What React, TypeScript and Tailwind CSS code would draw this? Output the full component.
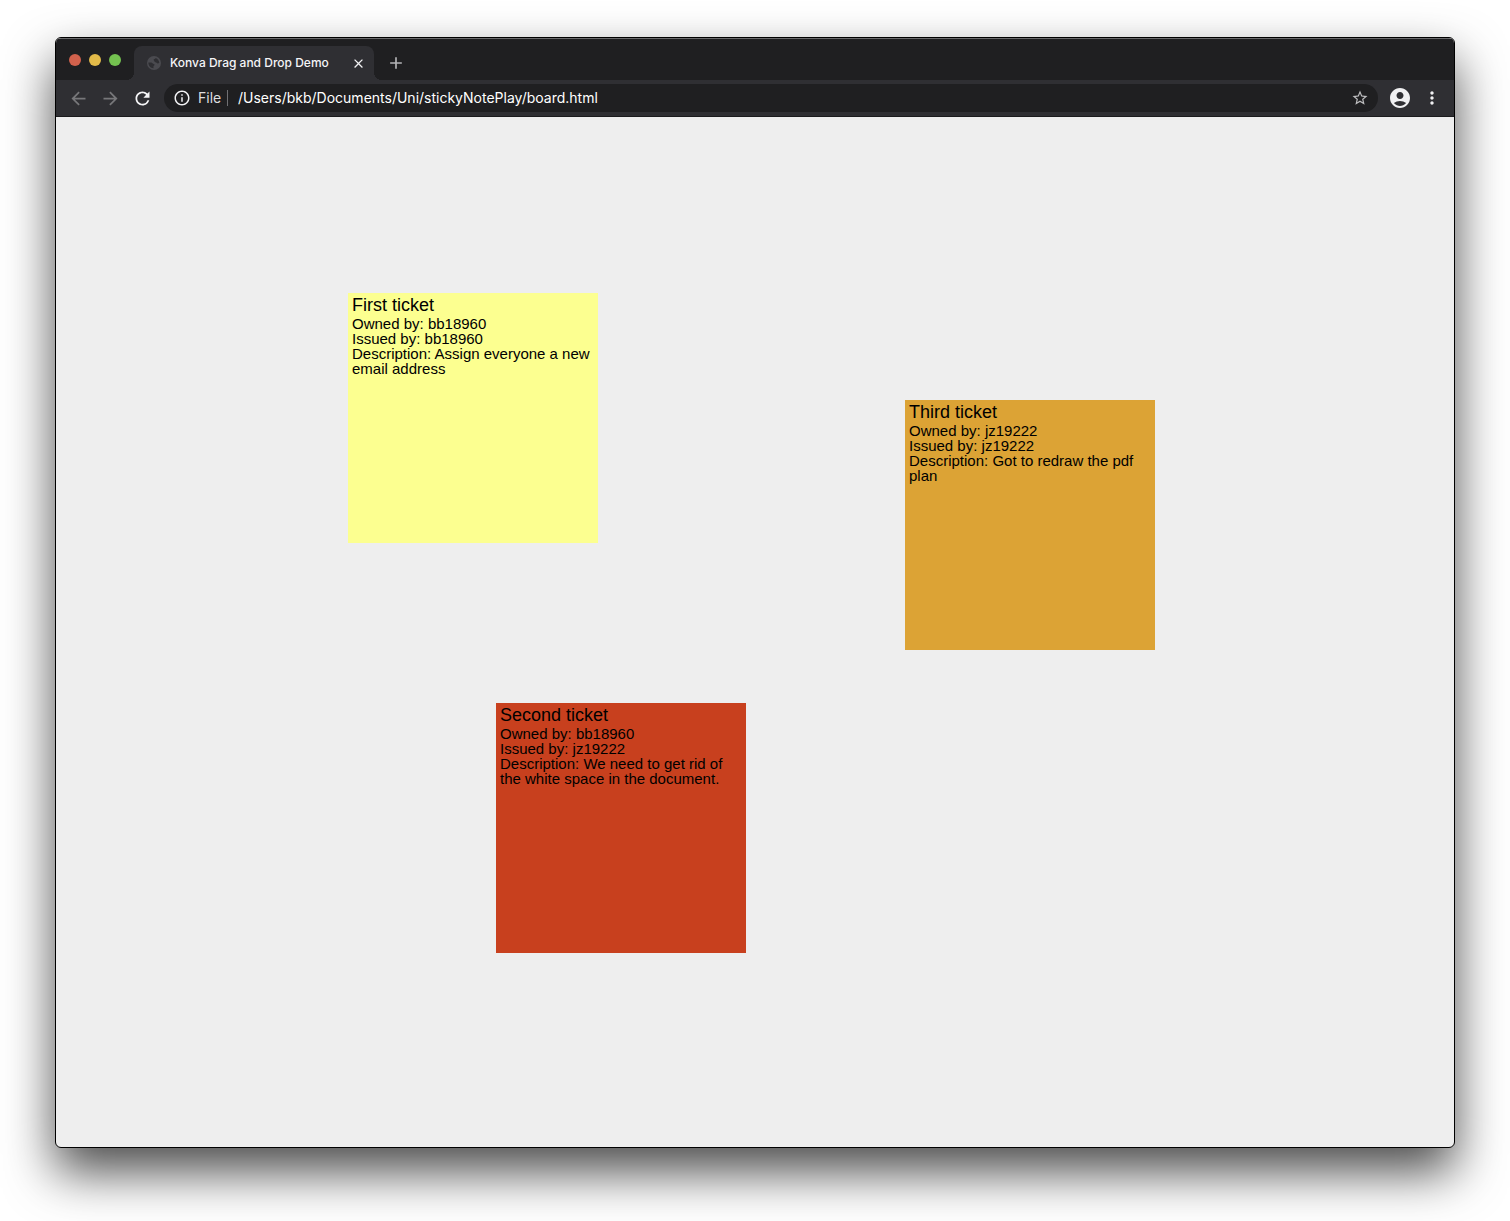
import { useState } from "react";
import {
  MdAccountCircle,
  MdAdd,
  MdArrowBack,
  MdArrowForward,
  MdClose,
  MdInfoOutline,
  MdMoreVert,
  MdRefresh,
  MdStarBorder,
} from "react-icons/md";

type Ticket = {
  title: string;
  owner: string;
  issuer: string;
  description: string;
  color: string;
  x: number;
  y: number;
};

const tickets: Ticket[] = [
  {
    title: "First ticket",
    owner: "bb18960",
    issuer: "bb18960",
    description: "Assign everyone a new email address",
    color: "bg-[#fcff90]",
    x: 292,
    y: 176,
  },
  {
    title: "Second ticket",
    owner: "bb18960",
    issuer: "jz19222",
    description: "We need to get rid of the white space in the document.",
    color: "bg-[#c8401e]",
    x: 440,
    y: 586,
  },
  {
    title: "Third ticket",
    owner: "jz19222",
    issuer: "jz19222",
    description: "Got to redraw the pdf plan",
    color: "bg-[#dca335]",
    x: 849,
    y: 283,
  },
];

function Globe() {
  return (
    <svg viewBox="0 0 14 14" className="size-3.5 shrink-0" aria-hidden="true">
      <circle cx="7" cy="7" r="7" fill="#4a4a4f" />
      <path
        d="M1.4 6.6h2.7c1.3 0 1.5 1.5 2.8 1.5.9 0 .9 1.9-.4 1.9v2.3C3.5 12.3 1.4 9.900 1.4 6.6zM8.6 1.9c-.1 1.300-2 .9-2 1.900 0 .9.900.8.900 1.700 0 1 1.900.5 2.300 1.500.3.700 1.700.4 2.500-.1 0-2.200-1.500-4.300-3.700-5z"
        fill="#2e2e32"
      />
    </svg>
  );
}

function TabStrip() {
  return (
    <div className="flex h-[41px] items-end bg-[#1f1f21]">
      <div className="flex gap-2 self-center px-[13px]">
        <button aria-label="Close window" className="size-3 rounded-full bg-[#d1614c]" />
        <button aria-label="Minimise window" className="size-3 rounded-full bg-[#e2ba49]" />
        <button aria-label="Zoom window" className="size-3 rounded-full bg-[#74c250]" />
      </div>
      <div className="relative flex h-[34px] w-60 items-center rounded-t-lg bg-[#2f2f33] pr-2 pl-[13px]">
        <span className="absolute bottom-0 -left-2 size-2 bg-[radial-gradient(circle_at_0_0,transparent_8px,#2f2f33_8px)]" />
        <span className="absolute -right-2 bottom-0 size-2 bg-[radial-gradient(circle_at_100%_0,transparent_8px,#2f2f33_8px)]" />
        <Globe />
        <span className="ml-[9px] flex-1 text-xs font-medium whitespace-nowrap text-[#f5f5f7]">
          Konva Drag and Drop Demo
        </span>
        <button aria-label="Close tab" className="flex size-4 items-center justify-center text-[#f0f0f2]">
          <MdClose size={15} />
        </button>
      </div>
      <button aria-label="New tab" className="mb-[7px] ml-3 text-[#b4b4b6]">
        <MdAdd size={20} />
      </button>
    </div>
  );
}

function Toolbar() {
  const [url, setUrl] = useState("/Users/bkb/Documents/Uni/stickyNotePlay/board.html");
  return (
    <div className="flex h-[37px] items-center border-b border-[#1b1b1d] bg-[#2f2f33] px-3">
      <div className="flex gap-[11px]">
        <button aria-label="Back" className="text-[#77777a]">
          <MdArrowBack size={21} />
        </button>
        <button aria-label="Forward" className="text-[#77777a]">
          <MdArrowForward size={21} />
        </button>
        <button aria-label="Reload" className="text-[#f5f5f7]">
          <MdRefresh size={21} />
        </button>
      </div>
      <div className="mr-[10px] ml-[11px] flex h-7 flex-1 items-center rounded-full bg-[#1f1f21] px-[9px] text-sm text-white">
        <button aria-label="View site information" className="text-[#f0f0f2]">
          <MdInfoOutline size={18} />
        </button>
        <label htmlFor="address" className="ml-[7px] w-[29px] text-[#dededf]">
          File
        </label>
        <span className="h-4 w-px bg-[#707073]" />
        <input
          id="address"
          value={url}
          onChange={(e) => setUrl(e.target.value)}
          className="ml-[10px] min-w-0 flex-1 bg-transparent outline-none"
        />
        <button aria-label="Bookmark this page" className="text-[#bdbdbf]">
          <MdStarBorder size={18} />
        </button>
      </div>
      <button aria-label="Profile" className="text-[#f0f0f2]">
        <MdAccountCircle size={24} />
      </button>
      <button aria-label="Browser menu" className="ml-[10px] text-[#f0f0f2]">
        <MdMoreVert size={20} />
      </button>
    </div>
  );
}

function StickyNote({ ticket }: { ticket: Ticket }) {
  return (
    <article
      className={`absolute size-[250px] px-1 pt-[3px] font-['Liberation_Sans',Arial,sans-serif] text-[15px] leading-[15px] text-black ${ticket.color}`}
      style={{ left: ticket.x, top: ticket.y }}
    >
      <h2 className="mb-[2px] text-lg leading-[18px]">{ticket.title}</h2>
      <p>Owned by: {ticket.owner}</p>
      <p>Issued by: {ticket.issuer}</p>
      <p>Description: {ticket.description}</p>
    </article>
  );
}

export default function App() {
  return (
    <div className="flex min-h-screen overflow-hidden bg-white px-[55px] pt-[37px] pb-[73px] font-['Inter','Liberation_Sans',sans-serif]">
      <div className="flex flex-1 flex-col overflow-hidden rounded-md border border-black bg-[#eeeeee] shadow-[0_24px_50px_rgba(0,0,0,0.7)]">
        <div className="border-t border-[#6a6a6c]">
          <TabStrip />
        </div>
        <Toolbar />
        <main className="relative flex-1">
          {tickets.map((ticket) => (
            <StickyNote key={ticket.title} ticket={ticket} />
          ))}
        </main>
      </div>
    </div>
  );
}
